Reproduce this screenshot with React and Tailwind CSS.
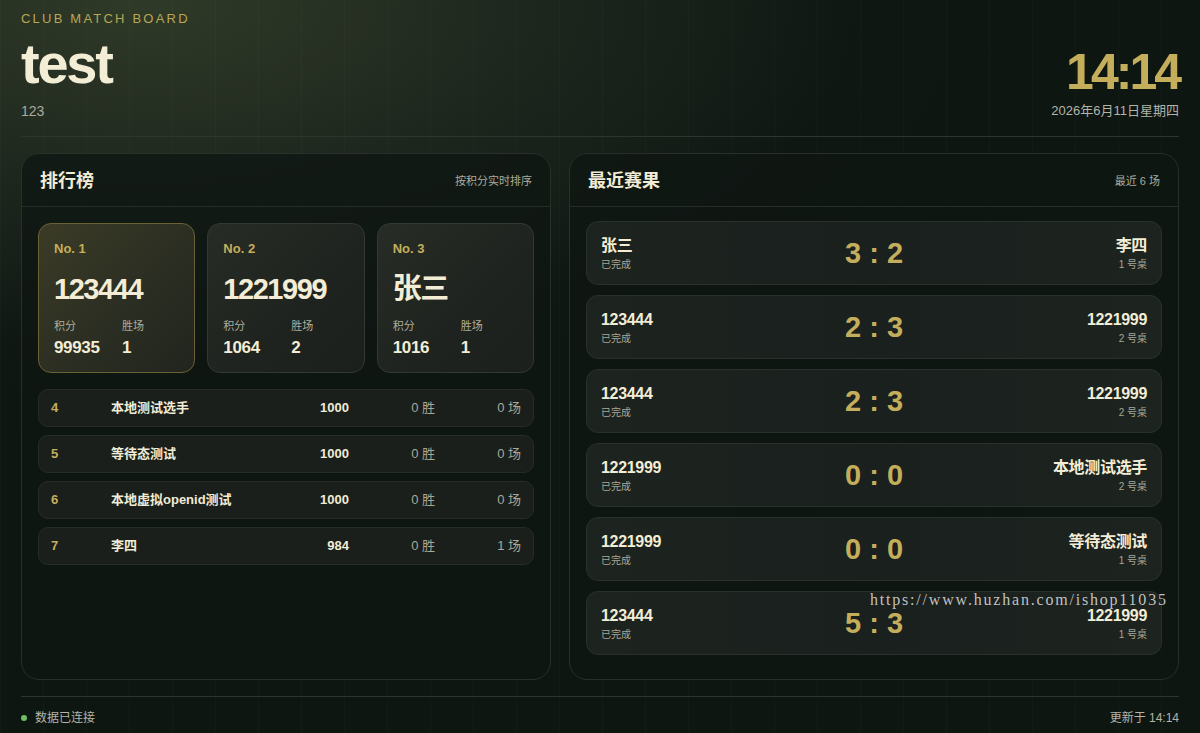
const FONT = { fontFamily: '"Liberation Sans", "Noto Sans CJK SC", sans-serif' };

const top3 = [
  { rank: 1, name: '123444', score: 99935, wins: 1 },
  { rank: 2, name: '1221999', score: 1064, wins: 2 },
  { rank: 3, name: '张三', score: 1016, wins: 1 },
];

const others = [
  { rank: 4, name: '本地测试选手', score: 1000, wins: 0, games: 0 },
  { rank: 5, name: '等待态测试', score: 1000, wins: 0, games: 0 },
  { rank: 6, name: '本地虚拟openid测试', score: 1000, wins: 0, games: 0 },
  { rank: 7, name: '李四', score: 984, wins: 0, games: 1 },
];

const matches = [
  { a: '张三', b: '李四', sa: 3, sb: 2, table: 1 },
  { a: '123444', b: '1221999', sa: 2, sb: 3, table: 2 },
  { a: '123444', b: '1221999', sa: 2, sb: 3, table: 2 },
  { a: '1221999', b: '本地测试选手', sa: 0, sb: 0, table: 2 },
  { a: '1221999', b: '等待态测试', sa: 0, sb: 0, table: 1 },
  { a: '123444', b: '1221999', sa: 5, sb: 3, table: 1 },
];

function PanelHeader({ title, note }) {
  return (
    <div className="h-[53px] px-[18px] pt-[2px] flex items-center justify-between border-b border-[#252d27]">
      <h2 className="text-[18px] font-bold text-[#f1ecd6]">{title}</h2>
      <span className="text-[11px] text-[#a9ab9d]">{note}</span>
    </div>
  );
}

function TopCard({ p }) {
  const first = p.rank === 1;
  return (
    <div
      className={`h-[150px] rounded-[13px] border px-[15px] pt-[16px] ${
        first
          ? 'border-[#6a6234] bg-[linear-gradient(135deg,#3b3b26_0%,#2b2e22_55%,#21251e_100%)]'
          : 'border-[#323832] bg-[linear-gradient(135deg,#272c26_0%,#1e231f_60%,#1b201d_100%)]'
      }`}
    >
      <div className="text-[13px] leading-[18px] font-bold text-[#c4ae5c]">No. {p.rank}</div>
      <div className="mt-[14px] text-[29px] leading-[34px] font-bold tracking-[-0.05em] text-[#f3edd6]">{p.name}</div>
      <div className="mt-[13px] flex">
        <div className="w-[68px]">
          <div className="text-[11px] leading-[14px] text-[#aeae9f]">积分</div>
          <div className="mt-[5px] text-[17px] leading-[20px] font-bold text-[#f3edd6] tracking-[-0.02em]">{p.score}</div>
        </div>
        <div>
          <div className="text-[11px] leading-[14px] text-[#aeae9f]">胜场</div>
          <div className="mt-[5px] text-[17px] leading-[20px] font-bold text-[#f3edd6]">{p.wins}</div>
        </div>
      </div>
    </div>
  );
}

function RankRow({ p }) {
  return (
    <div className="h-[38px] rounded-[10px] border border-[#262c28] bg-[#1a1f1c] px-[12px] grid grid-cols-[60px_1fr_82px_86px_86px] items-center text-[13px]">
      <span className="font-bold text-[#c4ae5c]">{p.rank}</span>
      <span className="font-bold text-[#f1ecd6]">{p.name}</span>
      <span className="text-right font-bold text-[#f1ecd6]">{p.score}</span>
      <span className="text-right text-[#a6a898]">{p.wins} 胜</span>
      <span className="text-right text-[#a6a898]">{p.games} 场</span>
    </div>
  );
}

function MatchCard({ m }) {
  return (
    <div className="h-[64px] rounded-[12px] border border-[#2a302b] bg-[linear-gradient(90deg,#1d231f_0%,#1a201d_50%,#1d231f_100%)] px-[14px] grid grid-cols-[1fr_auto_1fr] items-center">
      <div>
        <div className="text-[16px] leading-[19px] font-bold text-[#f3edd6] tracking-[-0.02em]">{m.a}</div>
        <div className="mt-[4px] text-[10px] leading-[12px] text-[#a6a898]">已完成</div>
      </div>
      <div className="text-[29px] leading-[34px] font-bold text-[#c4ae5c] whitespace-pre">
        {m.sa} : {m.sb}
      </div>
      <div className="text-right">
        <div className="text-[16px] leading-[19px] font-bold text-[#f3edd6] tracking-[-0.02em]">{m.b}</div>
        <div className="mt-[4px] text-[10px] leading-[12px] text-[#a6a898]">{m.table} 号桌</div>
      </div>
    </div>
  );
}

export default function App() {
  return (
    <div
      style={FONT}
      className="relative h-[733px] w-full overflow-hidden bg-[#0e1512] bg-[radial-gradient(ellipse_75%_60%_at_12%_0%,#303a28_0%,#1d261d_45%,#0f1713_80%,#0e1612_100%)] flex flex-col"
    >
      <div className="pointer-events-none absolute inset-0 bg-[linear-gradient(90deg,rgba(255,255,255,0.018)_1px,transparent_1px)] bg-[size:43px_100%]" />

      <header className="relative mx-[21px] pt-[11px] pb-[15px] flex items-end justify-between border-b border-[#2c362d]">
        <div>
          <div className="text-[13px] leading-[16px] tracking-[0.17em] text-[#b9a655]">CLUB MATCH BOARD</div>
          <h1 className="mt-[9px] text-[56px] leading-[56px] font-bold tracking-[-0.04em] text-[#f3edd6]">test</h1>
          <div className="mt-[9px] text-[14px] leading-[20px] text-[#a9ab9f]">123</div>
        </div>
        <div className="flex flex-col items-end">
          <div className="text-[50px] leading-[50px] font-bold tracking-[-0.06em] text-[#c4ae5c]">14:14</div>
          <div className="mt-[4px] text-[13px] leading-[20px] text-[#b3b4a8]">2026年6月11日星期四</div>
        </div>
      </header>

      <main className="relative flex-1 min-h-0 mx-[21px] py-[16px] grid grid-cols-[530px_1fr] gap-[18px]">
        <section className="rounded-[18px] border border-[#283029] bg-[#0f1613]/80 flex flex-col">
          <PanelHeader title="排行榜" note="按积分实时排序" />
          <div className="px-[16px] pt-[16px]">
            <div className="grid grid-cols-3 gap-[12px]">
              {top3.map((p) => (
                <TopCard key={p.rank} p={p} />
              ))}
            </div>
            <div className="mt-[16px] flex flex-col gap-[8px]">
              {others.map((p) => (
                <RankRow key={p.rank} p={p} />
              ))}
            </div>
          </div>
        </section>

        <section className="rounded-[18px] border border-[#283029] bg-[#0f1613]/80 flex flex-col">
          <PanelHeader title="最近赛果" note="最近 6 场" />
          <div className="px-[16px] pt-[14px] flex flex-col gap-[10px]">
            {matches.map((m, i) => (
              <MatchCard key={i} m={m} />
            ))}
          </div>
        </section>
      </main>

      <footer className="relative mx-[21px] h-[37px] pt-[5px] border-t border-[#2c362d] flex items-center justify-between text-[12px] text-[#b3b4a8]">
        <div className="flex items-center gap-[8px]">
          <span className="h-[6px] w-[6px] rounded-full bg-[#6cbf62]" />
          <span>数据已连接</span>
        </div>
        <span>更新于 14:14</span>
      </footer>

      <div
        className="pointer-events-none absolute left-[870px] top-[590px] text-[16px] leading-[20px] tracking-[1.8px] text-[#d6d6d6]/90"
        style={{ fontFamily: '"Liberation Serif", serif' }}
      >
        https://www.huzhan.com/ishop11035
      </div>
    </div>
  );
}
